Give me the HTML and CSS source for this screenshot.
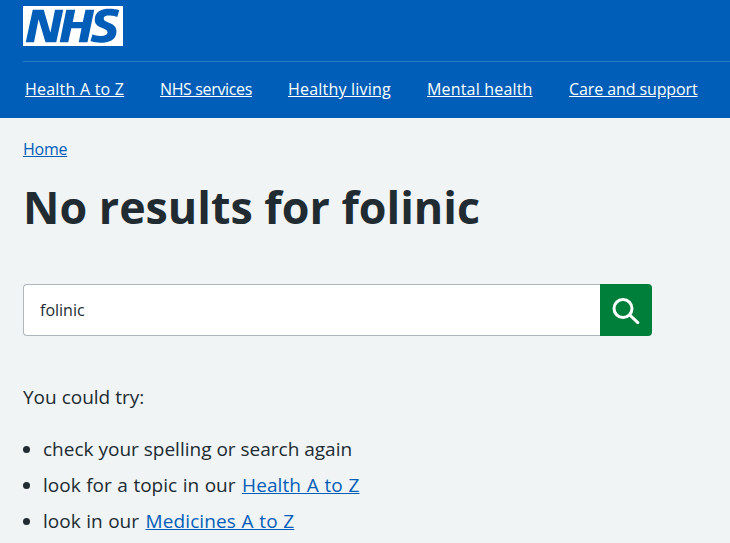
FILE: index.html
```html
<!DOCTYPE html>
<html lang="en">
<head>
<meta charset="utf-8">
<title>No results for folinic</title>
<link rel="stylesheet" href="styles.css">
</head>
<body>
<header class="header">
  <a class="logo" href="#" aria-label="NHS homepage">
    <svg class="logo-svg" viewBox="0 0 40 16" xmlns="http://www.w3.org/2000/svg">
      <path fill="#fff" d="M0 0h40v16H0z"/>
      <path fill="#005eb8" d="M3.9 1.5h4.4l2.6 9h.1l1.8-9h3.3l-2.8 13H9l-2.7-9h-.1l-1.8 9H1.1M17.3 1.5h3.6l-1 4.9h4L25 1.5h3.5l-2.7 13h-3.5l1.1-5.6h-4.1l-1.2 5.6h-3.4M37.7 4.4c-.7-.3-1.6-.6-2.9-.6-1.4 0-2.5.2-2.5 1.3 0 1.8 5.1 1.2 5.1 5.1 0 3.6-3.3 4.5-6.4 4.5-1.3 0-2.9-.3-4-.7l.8-2.7c.7.4 2.1.7 3.2.7s2.8-.2 2.8-1.5c0-2.1-5.1-1.3-5.1-5 0-3.4 2.9-4.4 5.8-4.4 1.6 0 3.1.2 4 .6"/>
    </svg>
  </a>
  <nav class="nav">
    <a class="nav-a" href="#">Health A to Z</a>
    <a class="nav-b" href="#">NHS services</a>
    <a class="nav-c" href="#">Healthy living</a>
    <a class="nav-d" href="#">Mental health</a>
    <a class="nav-e" href="#">Care and support</a>
  </nav>
</header>
<main class="main">
  <a class="crumb" href="#">Home</a>
  <h1 class="title">No results for folinic</h1>
  <form class="search">
    <div class="search-input">folinic</div>
    <button class="search-btn" type="button" aria-label="Search">
      <svg class="search-icon" viewBox="0 0 28 28" xmlns="http://www.w3.org/2000/svg">
        <circle cx="11" cy="12.5" r="9" fill="none" stroke="#fff" stroke-width="3"/>
        <path d="M17.8 19l8 7.6" fill="none" stroke="#fff" stroke-width="3" stroke-linecap="round"/>
      </svg>
    </button>
  </form>
  <p class="intro">You could try:</p>
  <ul class="tips">
    <li>check your spelling or search again</li>
    <li class="tip-link">look for a topic in our <a href="#">Health A to Z</a></li>
    <li class="tip-link">look in our <a href="#">Medicines A to Z</a></li>
  </ul>
</main>
</body>
</html>
```
FILE: styles.css
```css
html, body {
  margin: 0;
  height: 543px;
  overflow: hidden;
}
body {
  background: #f0f4f5;
  color: #212b32;
  font-family: "Open Sans", "Noto Sans", sans-serif;
}
.header {
  background: #005eb8;
  height: 118px;
  padding-left: 23px;
  box-sizing: border-box;
}
.logo {
  display: block;
  width: 100px;
  height: 40px;
  padding-top: 6px;
}
.logo-svg {
  display: block;
  width: 100px;
  height: 40px;
}
.nav {
  margin-top: 15px;
  border-top: 1px solid #2a77c3;
  padding: 15px 0 0 2px;
  display: grid;
  grid-template-columns: 99px 92px 103px 106px 129px;
  gap: 36px;
  font-size: 16px;
  line-height: 24px;
  white-space: nowrap;
}
.nav a {
  color: #fff;
}
.nav-a { letter-spacing: 0.22px; }
.nav-b { letter-spacing: -0.36px; }
.nav-c { letter-spacing: 0.2px; }
.nav-d { letter-spacing: 0.18px; }
.nav-e { letter-spacing: -0.1px; }
.main {
  padding: 19px 0 0 23px;
}
.crumb {
  display: block;
  width: max-content;
  color: #005eb8;
  font-size: 16px;
  line-height: 24px;
  letter-spacing: -0.25px;
}
.title {
  margin: 17px 0 0;
  font-size: 44.8px;
  line-height: 58px;
  font-weight: 700;
}
.search {
  display: flex;
  margin-top: 48px;
  width: 629px;
  height: 52px;
}
.search-input {
  flex: 1;
  box-sizing: border-box;
  background: #fff;
  border: 1px solid #aeb7bd;
  border-right: 0;
  border-radius: 4px 0 0 4px;
  padding-left: 16px;
  font-size: 16px;
  line-height: 50px;
}
.search-btn {
  width: 52px;
  height: 52px;
  padding: 0;
  border: 0;
  background: #007f3b;
  border-radius: 0 4px 4px 0;
  display: flex;
  align-items: center;
  justify-content: center;
}
.search-icon {
  display: block;
  width: 28px;
  height: 28px;
}
.intro {
  margin: 47px 0 0;
  font-size: 19px;
  line-height: 28px;
}
.tips {
  margin: 24px 0 0;
  padding: 0 0 0 20px;
  font-size: 19px;
  line-height: 28px;
}
.tips li {
  margin-bottom: 8px;
}
.tips .tip-link {
  word-spacing: 0.6px;
}
.tips a {
  color: #005eb8;
  letter-spacing: 0.1px;
  margin-left: 1px;
}
```
